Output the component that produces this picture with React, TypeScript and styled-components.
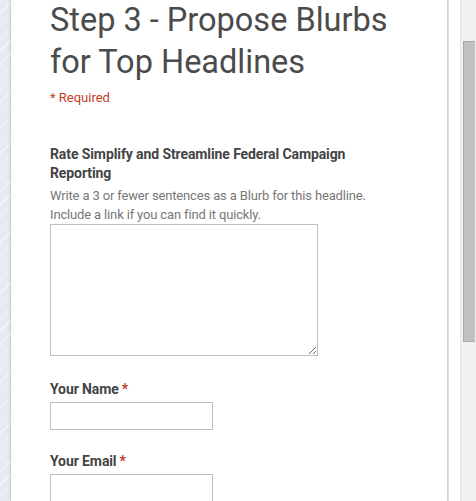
import React from "react";
import styled, { createGlobalStyle } from "styled-components";

const Global = createGlobalStyle`
  html, body { margin: 0; padding: 0; height: 100%; overflow: hidden; }
  body { font-family: Roboto, "Liberation Sans", Arial, sans-serif; }
  #root { height: 100%; }
`;

const Window = styled.div`
  display: flex;
  width: 476px;
  height: 501px;
  overflow: hidden;
`;

const Viewport = styled.div`
  flex: 0 0 460px;
  display: flex;
  background-color: #e5eaf3;
  background-image: repeating-linear-gradient(
    135deg,
    rgba(255, 255, 255, 0.55) 0px,
    rgba(255, 255, 255, 0.55) 1px,
    transparent 1px,
    transparent 9px
  );
  overflow: hidden;
`;

const Card = styled.main`
  margin-left: 11px;
  width: 436px;
  background: #fff;
  box-shadow: -1px 0 2px rgba(0, 0, 0, 0.12), 1px 0 3px rgba(0, 0, 0, 0.15);
  padding: 0 0 0 39px;
  box-sizing: border-box;
  display: flex;
  flex-direction: column;
`;

const Gap = styled.div`
  flex: 0 0 11px;
  background: #fff;
  margin-left: 2px;
`;

const Title = styled.h1`
  margin: -1px 0 0 0;
  font-family: Roboto, "Liberation Sans", sans-serif;
  font-weight: 400;
  font-size: 32.5px;
  line-height: 42px;
  color: #4b4b4b;
  width: 380px;
`;

const Required = styled.div`
  margin-top: 7px;
  font-size: 13px;
  line-height: 16px;
  color: #c43b1d;
`;

const Question = styled.section<{ $top: number }>`
  margin-top: ${(p) => p.$top}px;
  display: flex;
  flex-direction: column;
`;

const Label = styled.div`
  font-size: 14px;
  font-weight: 700;
  line-height: 19px;
  letter-spacing: -0.1px;
  color: #444;
  width: 330px;
`;

const Star = styled.span`
  color: #c43b1d;
  margin-left: 3px;
`;

const Help = styled.div`
  margin-top: 3px;
  font-size: 13px;
  line-height: 19px;
  letter-spacing: -0.15px;
  color: #777;
  width: 330px;
`;

const Area = styled.textarea`
  box-sizing: border-box;
  width: 268px;
  height: 132px;
  margin: 0;
  border: 1px solid #bfbfbf;
  padding: 2px;
  font-family: inherit;
  display: block;
`;

const Input = styled.input`
  box-sizing: border-box;
  width: 163px;
  height: 28px;
  margin: 3px 0 0 0;
  border: 1px solid #bfbfbf;
  padding: 2px 4px;
  display: block;
`;

const Scrollbar = styled.div`
  flex: 0 0 16px;
  background: #f1f1f1;
  border-left: 1px solid #e4e4e4;
  box-sizing: border-box;
  display: flex;
  flex-direction: column;
  padding: 41px 1px 0 2px;
`;

const Thumb = styled.div`
  height: 301px;
  background: #c1c1c1;
  border: 1px solid #aaa;
  border-right: none;
  box-sizing: border-box;
`;

export default function App() {
  return (
    <>
      <Global />
      <Window>
        <Viewport>
          <Card>
            <Title>Step 3 - Propose Blurbs for Top Headlines</Title>
            <Required>* Required</Required>
            <Question $top={39}>
              <Label>Rate Simplify and Streamline Federal Campaign Reporting</Label>
              <Help>
                Write a 3 or fewer sentences as a Blurb for this headline. Include a link if you can find it quickly.
              </Help>
              <Area />
            </Question>
            <Question $top={24}>
              <Label>
                Your Name<Star>*</Star>
              </Label>
              <Input />
            </Question>
            <Question $top={22}>
              <Label>
                Your Email<Star>*</Star>
              </Label>
              <Input />
            </Question>
          </Card>
          <Gap />
        </Viewport>
        <Scrollbar>
          <Thumb />
        </Scrollbar>
      </Window>
    </>
  );
}
